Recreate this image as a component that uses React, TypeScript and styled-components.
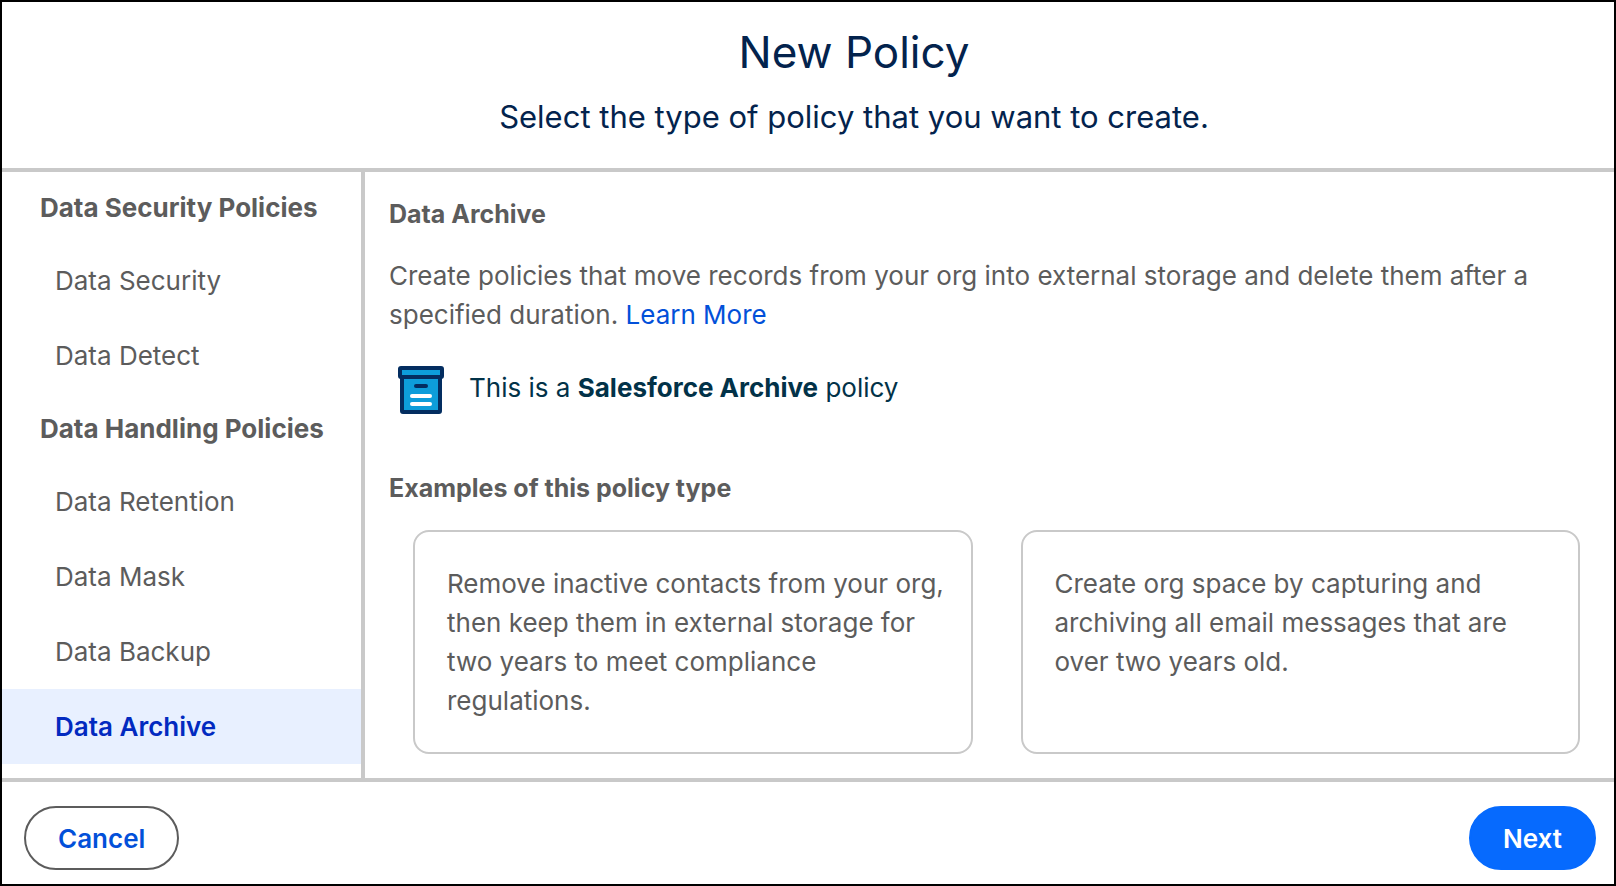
import React, { useState } from "react";
import styled, { createGlobalStyle } from "styled-components";

const GlobalStyle = createGlobalStyle`
  *, *::before, *::after { box-sizing: border-box; }
  body {
    margin: 0;
    background: #ffffff;
    color: #5c5c5c;
    font-family: Inter, "Liberation Sans", sans-serif;
    font-size: 26px;
    line-height: 39px;
  }
  h1, h2, h3, p, ul { margin: 0; padding: 0; }
  ul { list-style: none; }
  button { font: inherit; cursor: pointer; }
`;

const Modal = styled.div`
  display: flex;
  flex-direction: column;
  min-height: 100vh;
  border: 2px solid #000000;
`;

const Header = styled.header`
  padding: 20px 0 28px 92px;
  border-bottom: 4px solid #c9c9c9;
  color: #03234d;
  text-align: center;
`;

const Title = styled.h1`
  font-size: 44px;
  font-weight: 400;
  line-height: 60px;
`;

const Subtitle = styled.p`
  padding-top: 12px;
  font-size: 31px;
  line-height: 46px;
`;

const Body = styled.div`
  display: flex;
  flex: 1;
`;

const Sidebar = styled.nav`
  flex: 0 0 363px;
  border-right: 4px solid #c9c9c9;
`;

const GroupTitle = styled.h2`
  padding: 16px 8px 16px 38px;
  font-size: 26px;
  font-weight: 700;
`;

const NavItem = styled.button<{ $active: boolean }>`
  display: block;
  width: 100%;
  padding: 18px 8px 18px 53px;
  border: 0;
  background: ${(p) => (p.$active ? "#e8f0ff" : "transparent")};
  color: ${(p) => (p.$active ? "#022ac0" : "#5c5c5c")};
  font-weight: ${(p) => (p.$active ? 600 : 400)};
  text-align: left;
`;

const Content = styled.main`
  flex: 1;
  min-width: 0;
  padding: 24px 34px 24px 24px;
`;

const SectionTitle = styled.h3`
  font-size: 25px;
  font-weight: 700;
  line-height: 36px;
`;

const Description = styled.p`
  padding-top: 24px;
`;

const Link = styled.a`
  color: #0250d9;
  text-decoration: none;
`;

const PolicyKind = styled.div`
  display: flex;
  gap: 24px;
  padding: 32px 0 56px 8px;
  color: #023248;
  line-height: 44px;
`;

const Examples = styled.ul`
  display: grid;
  grid-template-columns: 1fr 1fr;
  gap: 48px;
  padding: 24px 0 0 24px;
`;

const Example = styled.li`
  padding: 32px 24px 32px 32px;
  border: 2px solid #c9c9c9;
  border-radius: 16px;
`;

const Footer = styled.footer`
  display: flex;
  justify-content: space-between;
  padding: 24px 18px 14px 22px;
  border-top: 4px solid #c9c9c9;
`;

const PillButton = styled.button<{ $primary?: boolean }>`
  height: 64px;
  padding: 0 32px;
  border: 2px solid ${(p) => (p.$primary ? "#066afe" : "#5c5c5c")};
  border-radius: 32px;
  background: ${(p) => (p.$primary ? "#066afe" : "#ffffff")};
  color: ${(p) => (p.$primary ? "#ffffff" : "#0250d9")};
  font-weight: 600;
`;

const ArchiveIcon = () => (
  <svg width="48" height="48" viewBox="0 0 48 48" aria-hidden="true">
    <rect x="5" y="10" width="38" height="36" rx="1" fill="#0d9dda" stroke="#032d60" strokeWidth="4" />
    <rect x="3" y="2" width="42" height="9" rx="1" fill="#0d9dda" stroke="#032d60" strokeWidth="4" />
    <rect x="17" y="18" width="14" height="4" rx="2" fill="#032d60" />
    <rect x="13" y="28" width="22" height="4" rx="2" fill="#ffffff" />
    <rect x="13" y="36" width="22" height="4" rx="2" fill="#ffffff" />
  </svg>
);

const groups = [
  { title: "Data Security Policies", items: ["Data Security", "Data Detect"] },
  {
    title: "Data Handling Policies",
    items: ["Data Retention", "Data Mask", "Data Backup", "Data Archive"],
  },
];

const examples = [
  "Remove inactive contacts from your org, then keep them in external storage for two years to meet compliance regulations.",
  "Create org space by capturing and archiving all email messages that are over two years old.",
];

export default function App() {
  const [selected, setSelected] = useState("Data Archive");

  return (
    <>
      <GlobalStyle />
      <Modal role="dialog" aria-labelledby="policy-title">
        <Header>
          <Title id="policy-title">New Policy</Title>
          <Subtitle>Select the type of policy that you want to create.</Subtitle>
        </Header>
        <Body>
          <Sidebar>
            {groups.map((group) => (
              <section key={group.title}>
                <GroupTitle>{group.title}</GroupTitle>
                <ul>
                  {group.items.map((item) => (
                    <li key={item}>
                      <NavItem
                        type="button"
                        $active={item === selected}
                        onClick={() => setSelected(item)}
                      >
                        {item}
                      </NavItem>
                    </li>
                  ))}
                </ul>
              </section>
            ))}
          </Sidebar>
          <Content>
            <SectionTitle>Data Archive</SectionTitle>
            <Description>
              Create policies that move records from your org into external storage and delete them
              after a specified duration. <Link href="#learn-more">Learn More</Link>
            </Description>
            <PolicyKind>
              <ArchiveIcon />
              <p>
                This is a <strong>Salesforce Archive</strong> policy
              </p>
            </PolicyKind>
            <SectionTitle>Examples of this policy type</SectionTitle>
            <Examples>
              {examples.map((text) => (
                <Example key={text}>{text}</Example>
              ))}
            </Examples>
          </Content>
        </Body>
        <Footer>
          <PillButton type="button">Cancel</PillButton>
          <PillButton type="button" $primary>
            Next
          </PillButton>
        </Footer>
      </Modal>
    </>
  );
}
